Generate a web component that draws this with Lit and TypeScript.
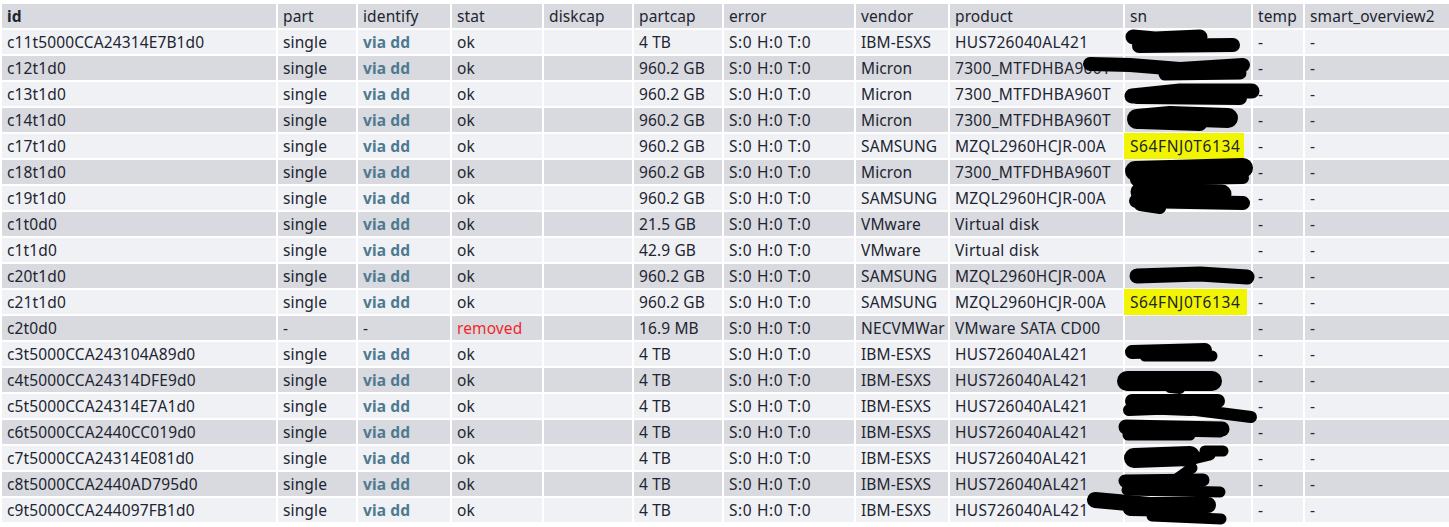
import { LitElement, html, css, svg } from "lit";
import { customElement } from "lit/decorators.js";

type Row = { id: string; part: string; identify: string; stat: string; cap: string; vendor: string; product: string; sn?: string; wide?: boolean };
const T4 = "HUS726040AL421";
const M = "7300_MTFDHBA960T";
const S = "MZQL2960HCJR-00A";
const G = "960.2 GB";
const mk = (id: string, cap: string, vendor: string, product: string, sn = "", wide = false): Row => ({
  id, part: "single", identify: "via dd", stat: "ok", cap, vendor, product, sn, wide,
});
const rows: Row[] = [
  mk("c11t5000CCA24314E7B1d0", "4 TB", "IBM-ESXS", T4),
  mk("c12t1d0", G, "Micron", M),
  mk("c13t1d0", G, "Micron", M),
  mk("c14t1d0", G, "Micron", M),
  mk("c17t1d0", G, "SAMSUNG", S, "S64FNJ0T6134"),
  mk("c18t1d0", G, "Micron", M),
  mk("c19t1d0", G, "SAMSUNG", S),
  mk("c1t0d0", "21.5 GB", "VMware", "Virtual disk"),
  mk("c1t1d0", "42.9 GB", "VMware", "Virtual disk"),
  mk("c20t1d0", G, "SAMSUNG", S),
  mk("c21t1d0", G, "SAMSUNG", S, "S64FNJ0T6134", true),
  { id: "c2t0d0", part: "-", identify: "-", stat: "removed", cap: "16.9 MB", vendor: "NECVMWar", product: "VMware SATA CD00", sn: "" },
  mk("c3t5000CCA243104A89d0", "4 TB", "IBM-ESXS", T4),
  mk("c4t5000CCA24314DFE9d0", "4 TB", "IBM-ESXS", T4),
  mk("c5t5000CCA24314E7A1d0", "4 TB", "IBM-ESXS", T4),
  mk("c6t5000CCA2440CC019d0", "4 TB", "IBM-ESXS", T4),
  mk("c7t5000CCA24314E081d0", "4 TB", "IBM-ESXS", T4),
  mk("c8t5000CCA2440AD795d0", "4 TB", "IBM-ESXS", T4),
  mk("c9t5000CCA244097FB1d0", "4 TB", "IBM-ESXS", T4),
];
const heads = ["id", "part", "identify", "stat", "diskcap", "partcap", "error", "vendor", "product", "sn", "temp", "smart_overview2"];
const widths = [274, 78, 92, 90, 88, 88, 130, 92, 173, 126, 50, 144];

const strokes: [string, number][] = [
  ["M1133 37L1155 39L1200 37", 15], ["M1139 46L1233 45", 14],
  ["M1090 64L1130 65L1180 69L1243 65", 14], ["M1165 74L1240 73", 13],
  ["M1132 96L1180 91L1252 91", 15], ["M1137 97L1240 98", 14],
  ["M1137 119L1170 116L1228 118", 20], ["M1140 122L1200 124", 14],
  ["M1135 171L1243 168", 20], ["M1136 180L1243 178", 12],
  ["M1140 192L1222 194", 19], ["M1136 201L1243 203", 14], ["M1140 205L1160 208", 12],
  ["M1137 276L1200 274L1247 277", 15],
  ["M1132 352L1205 350", 14], ["M1145 356L1212 356", 11],
  ["M1127 381L1212 381", 20], ["M1170 388L1180 389", 10],
  ["M1132 401L1218 401", 14], ["M1129 410L1180 408L1251 417", 12], ["M1140 407L1190 409", 14],
  ["M1126 427L1222 429", 15], ["M1128 435L1190 435", 11], ["M1175 432L1220 433", 9],
  ["M1134 458L1190 456", 20], ["M1205 451L1223 451", 11], ["M1185 461L1210 455", 11],
  ["M1192 468L1178 478", 11], ["M1125 481L1203 480", 13], ["M1127 490L1220 492", 11],
  ["M1095 500L1150 505L1208 505", 16], ["M1130 509L1190 510", 14], ["M1152 516L1221 519", 11],
];

@customElement("app-root")
export class AppRoot extends LitElement {
  static styles = css`
    :host { display: block; background: #fff; height: 527px; overflow: hidden; position: relative; padding-top: 2px; box-sizing: border-box; }
    table { border-collapse: separate; border-spacing: 2px; table-layout: fixed; width: 1451px;
      font: 15.5px/24px "Noto Sans", sans-serif; letter-spacing: 0.12px; color: #1d2530; }
    th, td { padding: 0 5px; height: 24px; text-align: left; font-weight: 400; white-space: nowrap; overflow: hidden; }
    th { background: #d9dadf; }
    th.first { font-weight: 700; }
    tr:nth-child(odd) td { background: #f0f1f5; }
    tr:nth-child(even) td { background: #d9dadf; }
    td.err { letter-spacing: 0.6px; }
    td.prod { letter-spacing: 0.3px; }
    .link { color: #4d7a90; font-weight: 700; }
    .removed { color: #f0282d; }
    mark { display: inline-block; box-sizing: border-box; width: 120px; height: 26px; margin: -1px 0 -1px -6px; padding-left: 6px;
      line-height: 26px; background: #f2f500; color: inherit; letter-spacing: 0.6px; vertical-align: top; }
    mark.wide { width: 123px; }
    td.sn { overflow: visible; }
    .ink { position: absolute; left: 0; top: 0; pointer-events: none; }
    .ink path { fill: none; stroke: #000; stroke-linecap: round; stroke-linejoin: round; }
  `;
  render() {
    return html`
      <table>
        <colgroup>${widths.map((w) => html`<col style="width:${w}px" />`)}</colgroup>
        <thead><tr>${heads.map((h, i) => html`<th class=${i === 0 ? "first" : ""}>${h}</th>`)}</tr></thead>
        <tbody>
          ${rows.map((r) => html`<tr>
            <td>${r.id}</td>
            <td>${r.part}</td>
            <td class=${r.identify === "-" ? "" : "link"}>${r.identify}</td>
            <td class=${r.stat === "ok" ? "" : "removed"}>${r.stat}</td>
            <td></td>
            <td>${r.cap}</td>
            <td class="err">S:0 H:0 T:0</td>
            <td>${r.vendor}</td>
            <td class="prod">${r.product}</td>
            <td class="sn">${r.sn ? html`<mark class=${r.wide ? "wide" : ""}>${r.sn}</mark>` : ""}</td>
            <td>-</td>
            <td>-</td>
          </tr>`)}
        </tbody>
      </table>
      <svg class="ink" width="1449" height="527" aria-hidden="true">
        ${strokes.map(([d, w]) => svg`<path d=${d} stroke-width=${w}></path>`)}
      </svg>
    `;
  }
}
